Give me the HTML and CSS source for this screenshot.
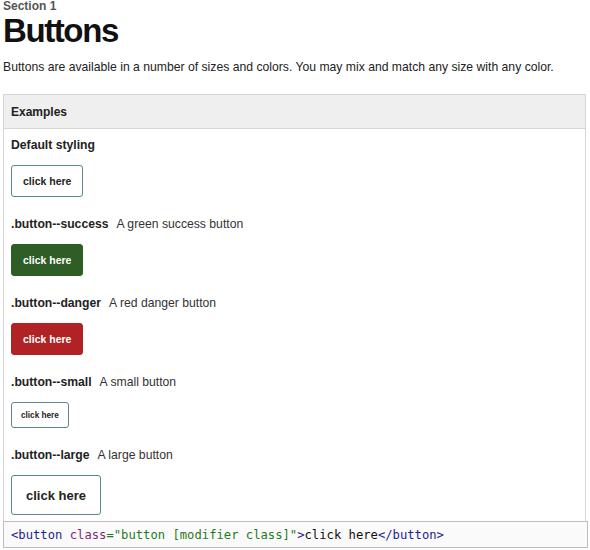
FILE: index.html
```html
<!DOCTYPE html>
<html>
<head>
<meta charset="utf-8">
<link rel="stylesheet" href="styles.css">
</head>
<body>
<div class="page">
  <div class="kicker">Section 1</div>
  <h1 class="title">Buttons</h1>
  <p class="intro">Buttons are available in a number of sizes and colors. You may mix and match any size with any color.</p>
  <div class="panel">
    <div class="panel-head">Examples</div>
    <div class="panel-body">
      <div class="example">
        <div class="label"><b>Default styling</b></div>
        <button class="button">click here</button>
      </div>
      <div class="example">
        <div class="label"><b>.button--success</b><span>A green success button</span></div>
        <button class="button button--success">click here</button>
      </div>
      <div class="example">
        <div class="label"><b>.button--danger</b><span>A red danger button</span></div>
        <button class="button button--danger">click here</button>
      </div>
      <div class="example">
        <div class="label"><b>.button--small</b><span>A small button</span></div>
        <button class="button button--small">click here</button>
      </div>
      <div class="example">
        <div class="label"><b>.button--large</b><span>A large button</span></div>
        <button class="button button--large">click here</button>
      </div>
    </div>
  </div>
  <div class="code"><code class="code-line"><span class="tag">&lt;button</span> <span class="attr">class</span><span class="str">="button [modifier class]"</span><span class="tag">&gt;</span>click here<span class="tag">&lt;/button&gt;</span></code></div>
</div>
</body>
</html>
```

FILE: styles.css
```css
html, body {
  margin: 0;
  padding: 0;
  background: #fff;
}
body {
  font-family: "Liberation Sans", Arial, sans-serif;
  color: #222;
}
.page {
  padding: 0 2px 0 3px;
}
.kicker {
  font-size: 12px;
  font-weight: bold;
  color: #555;
  line-height: 12px;
}
.title {
  margin: 0;
  font-size: 33px;
  line-height: 38px;
  letter-spacing: -1.4px;
  font-weight: bold;
  color: #111;
}
.intro {
  margin: 9px 0 0;
  font-size: 12.2px;
  line-height: 16px;
  color: #222;
}
.panel {
  margin-top: 19px;
  border: 1px solid #d6d6d6;
  border-bottom: none;
  margin-right: 2px;
}
.panel-head {
  background: #efefef;
  border-bottom: 1px solid #d6d6d6;
  height: 34px;
  box-sizing: border-box;
  padding: 0 7px;
  display: flex;
  align-items: center;
  font-size: 12px;
  font-weight: bold;
  color: #222;
}
.panel-body {
  padding: 8px 7px 6px;
  display: flex;
  flex-direction: column;
  align-items: flex-start;
  gap: 19px;
}
.example {
  display: flex;
  flex-direction: column;
  align-items: flex-start;
  gap: 12px;
}
.label {
  font-size: 12.2px;
  line-height: 16px;
  color: #222;
  display: flex;
  gap: 8px;
}
.label span {
  color: #333;
}
.button {
  font-family: "Liberation Sans", Arial, sans-serif;
  font-weight: bold;
  font-size: 10.5px;
  color: #222;
  background: #fff;
  border: 1.5px solid #5b8788;
  border-radius: 3px;
  height: 32px;
  padding: 0 11px;
  margin: 0;
  box-sizing: border-box;
}
.button--success {
  background: #2e5d25;
  border-color: #2e5d25;
  color: #fff;
}
.button--danger {
  background: #b02224;
  border-color: #b02224;
  color: #fff;
}
.button--small {
  font-size: 8.2px;
  height: 26px;
  padding: 0 9px;
}
.button--large {
  font-size: 13px;
  height: 40px;
  padding: 0 14px;
}
.code {
  border: 1px solid #bdbdbd;
  background: #fafafa;
  height: 27px;
  box-sizing: border-box;
  padding: 0 7px;
  display: flex;
  align-items: center;
}
.code-line {
  font-family: "DejaVu Sans Mono", monospace;
  font-size: 12.2px;
  color: #111;
  white-space: pre;
}
.tag { color: #1c1f8c; }
.attr { color: #7d2a7d; }
.str { color: #1f7a1f; }
```
